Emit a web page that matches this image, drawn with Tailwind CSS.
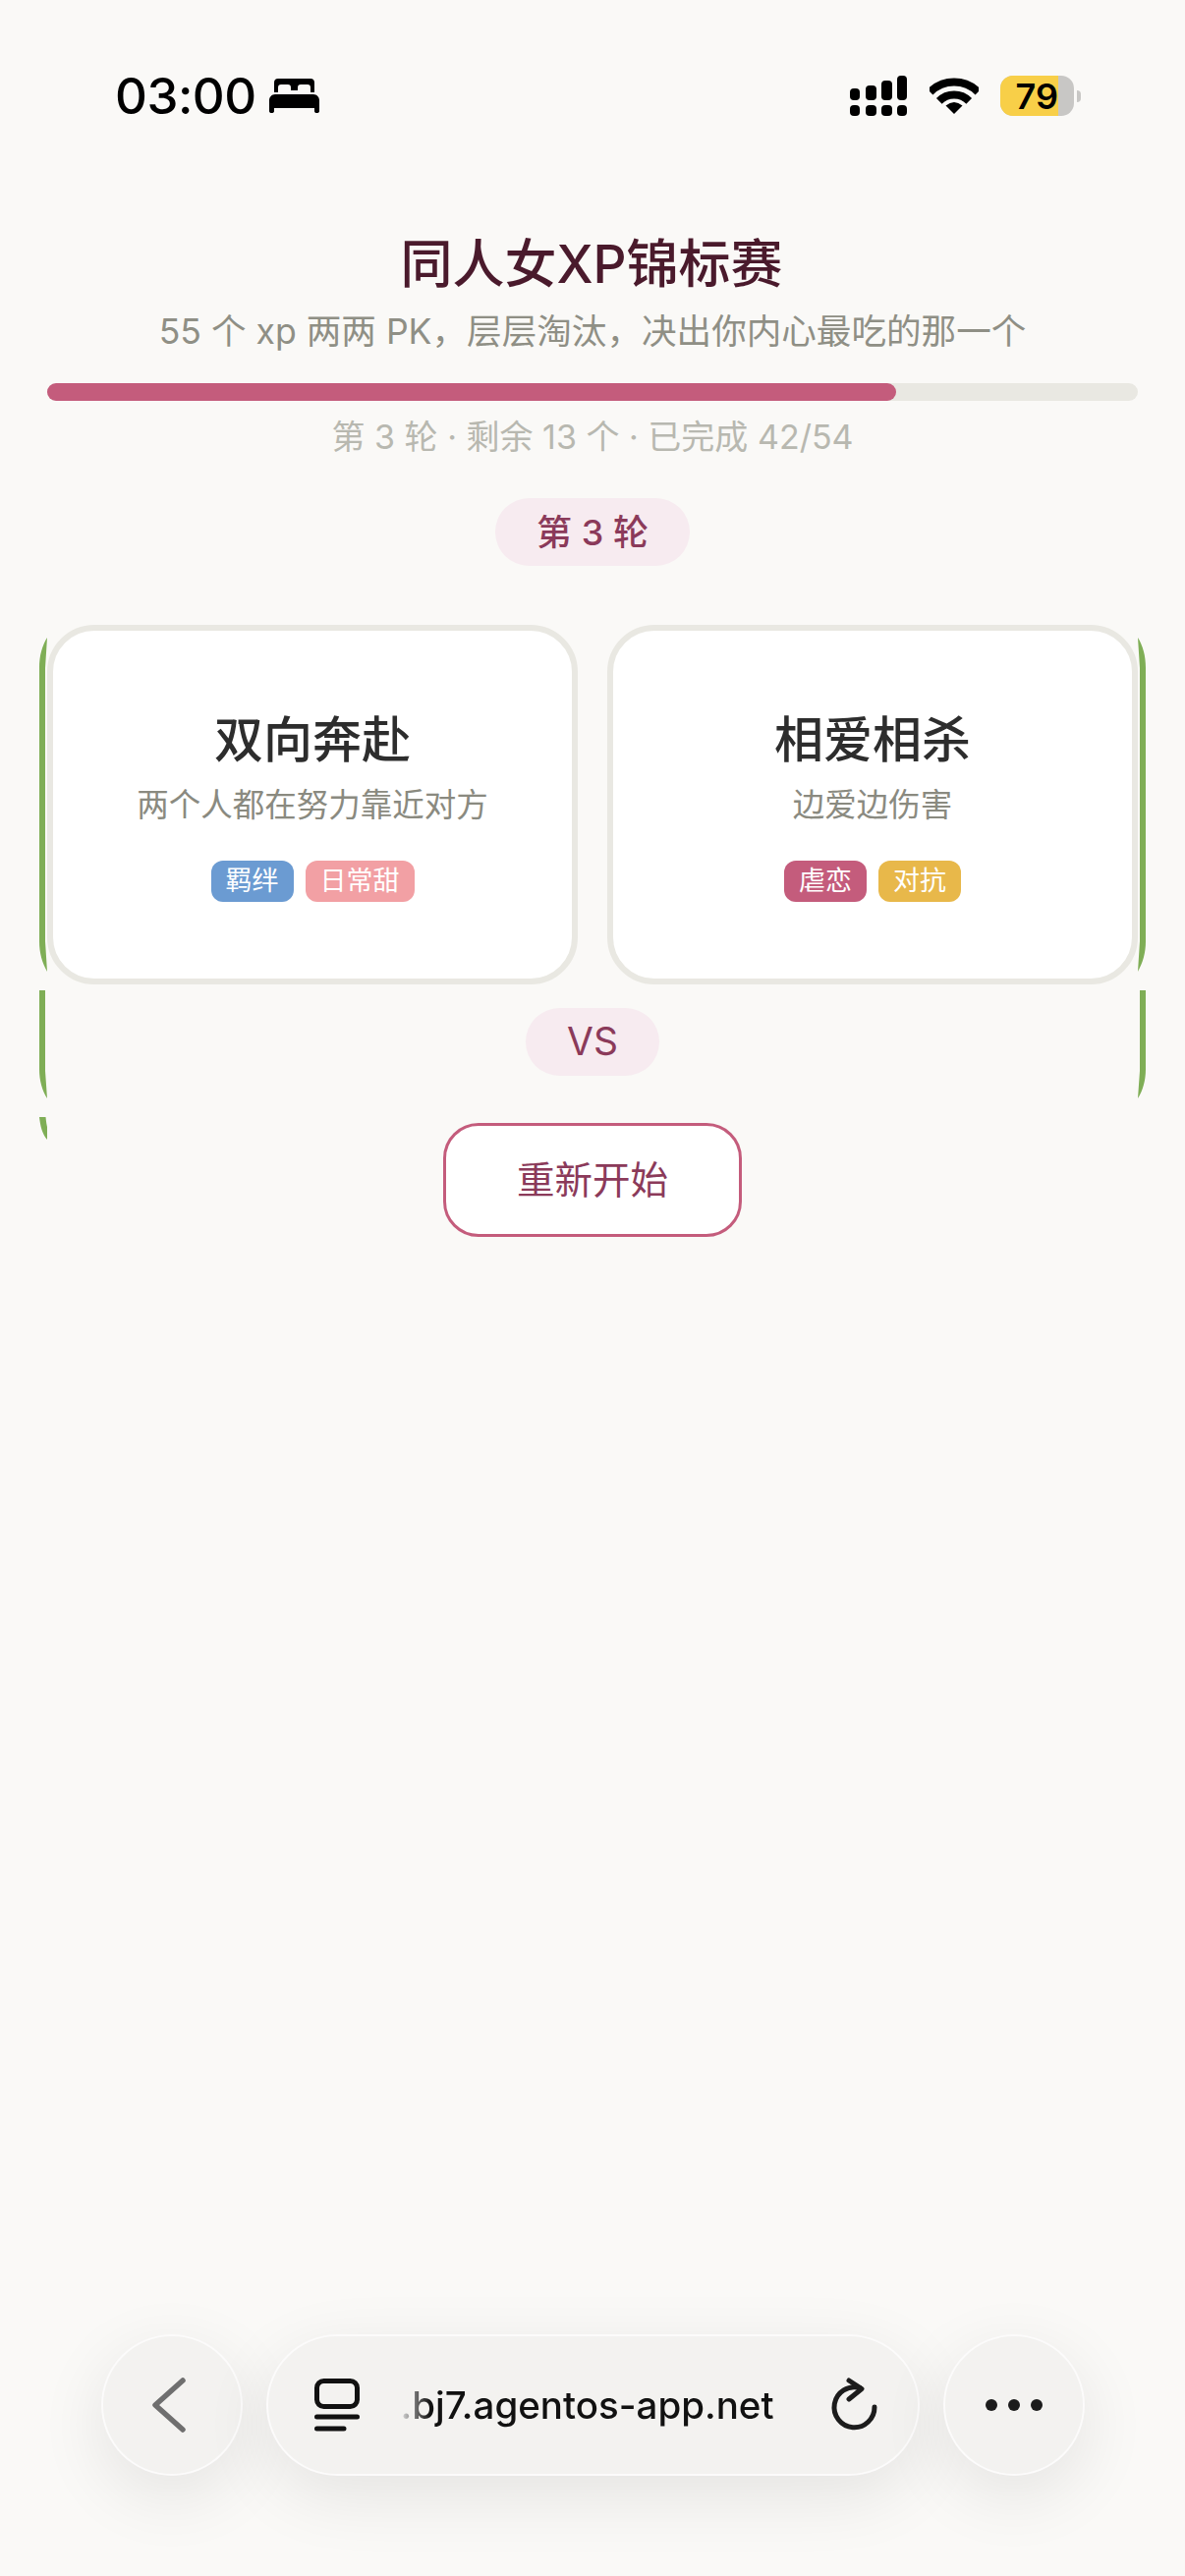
<!DOCTYPE html>
<html lang="zh-CN">
<head>
    <meta charset="UTF-8">
    <meta name="viewport" content="width=device-width, initial-scale=1.0">
    <title>同人女XP锦标赛</title>
    <script src="https://cdn.jsdelivr.net/npm/@tailwindcss/browser@4"></script>
</head>
<body class="bg-[#faf9f7]">
<div class="relative w-[1206px] h-[2622px] overflow-hidden flex flex-col bg-[#faf9f7] font-['Inter','Noto_Sans_CJK_SC',sans-serif]">

    <!-- green edges peeking out from behind the cards -->
    <svg class="absolute left-0 top-0" width="1206" height="1200" viewBox="0 0 1206 1200" fill="#7fae56">
        <path d="M48 649C43 657 40 667 40 680V958C40 970 43 980 48 989L46 958V680Z"/>
        <path d="M40 1008H46V1090L48 1118C43 1110 40 1100 40 1088Z"/>
        <path d="M40 1137H46.5C47 1142 47.5 1145 48 1147V1160C43 1154 41 1146 40 1137Z"/>
        <path d="M1158 649C1163 657 1166 667 1166 680V958C1166 970 1163 980 1158 989L1160 958V680Z"/>
        <path d="M1166 1008H1160V1090L1158 1118C1163 1110 1166 1100 1166 1088Z"/>
    </svg>

    <!-- status bar -->
    <div class="relative flex items-center justify-between h-[41px] mt-[77px] pl-[117px] pr-[106px]">
        <div class="flex items-center gap-[13px]">
            <span class="text-[51px] leading-[41px] font-medium text-black tracking-[-0.5px]">03:00</span>
            <svg width="51" height="35" viewBox="0 0 51 35" fill="#000">
                <path fill-rule="evenodd" d="M9 0H42C44.5 0 46 1.5 46 4V14H42V9C42 7 41 6 39 6H32C30 6 29 7 29 9V12H22V9C22 7 21 6 19 6H12C10 6 9 7 9 9V14H5V4C5 1.5 6.5 0 9 0Z"/>
                <path d="M6 16H45C48.5 16 51 19 51 22V33C51 34.5 50 35 48.5 35C47 35 46 34.5 46 33V30H5V33C5 34.5 4 35 2.5 35C1 35 0 34.5 0 33V22C0 19 2.5 16 6 16Z"/>
            </svg>
        </div>
        <div class="flex items-center">
            <svg width="58" height="41" viewBox="0 0 58 41" fill="#000">
                <rect x="0" y="13" width="10" height="12" rx="4"/>
                <rect x="16" y="10" width="11" height="15" rx="4"/>
                <rect x="32" y="5" width="11" height="20" rx="4"/>
                <rect x="48" y="0" width="10" height="25" rx="4"/>
                <rect x="0" y="30" width="10" height="11" rx="4"/>
                <rect x="16" y="30" width="11" height="11" rx="4"/>
                <rect x="32" y="30" width="11" height="11" rx="4"/>
                <rect x="48" y="30" width="10" height="11" rx="4"/>
            </svg>
            <svg class="ml-[23px]" width="50" height="37" viewBox="0 0 50 37" fill="none">
                <path d="M0.6 14.6A34.5 34.5 0 0 1 49.4 14.6" stroke="#000" stroke-width="8"/>
                <path d="M9.8 23.8A21.5 21.5 0 0 1 40.2 23.8" stroke="#000" stroke-width="8"/>
                <path d="M25 37L16.5 28.5Q25 21.5 33.5 28.5Z" fill="#000"/>
            </svg>
            <div class="relative ml-[22px] w-[75px] h-[41px] rounded-[13px] overflow-hidden bg-[#c8c7c5]">
                <div class="w-[59px] h-full bg-[#f8cf48] flex items-center justify-end">
                    <span class="text-[36px] leading-none font-semibold text-black">79</span>
                </div>
            </div>
            <div class="ml-[3px] w-[4px] h-[12px] rounded-r-full bg-[#c8c7c5]"></div>
        </div>
    </div>

    <!-- header -->
    <h1 class="relative mt-[121px] pr-[2px] text-center text-[53px] leading-[60px] font-medium text-[#4a1a2c]">同人女XP锦标赛</h1>
    <p class="relative mt-[15px] text-center text-[35.6px] leading-[48px] text-[#8f8f85]">55 个 xp 两两 PK，层层淘汰，决出你内心最吃的那一个</p>
    <div class="relative mt-[28px] mx-[48px] h-[18px] rounded-full bg-[#e9e8e2]">
        <div class="h-full w-[77.8%] rounded-full bg-[#c45c7c]"></div>
    </div>
    <p class="relative mt-[15px] text-center text-[34px] leading-[44px] text-[#b8b8b0]">第 3 轮 · 剩余 13 个 · 已完成 42/54</p>

    <div class="relative mt-[40px] flex justify-center">
        <span class="flex items-center justify-center w-[198px] h-[69px] rounded-full bg-[#f7ebf0] text-[36px] font-medium text-[#8b3a5a]">第 3 轮</span>
    </div>

    <!-- match cards -->
    <div class="relative mt-[60px] mx-[48px] grid grid-cols-2 gap-[30px]">
        <div class="h-[366px] rounded-[48px] border-[6px] border-[#e9e8e2] bg-white flex flex-col items-center pt-[81px]">
            <div class="text-[50px] leading-[60px] font-medium text-[#2d2d2d]">双向奔赴</div>
            <div class="mt-[15px] text-[32.5px] leading-[44px] text-[#8a8a80]">两个人都在努力靠近对方</div>
            <div class="mt-[34px] flex gap-[12px]">
                <span class="px-[15px] h-[42px] flex items-center rounded-[12px] bg-[#6b9bd2] text-[27px] text-white">羁绊</span>
                <span class="px-[15px] h-[42px] flex items-center rounded-[12px] bg-[#f2a0a4] text-[27px] text-white">日常甜</span>
            </div>
        </div>
        <div class="h-[366px] rounded-[48px] border-[6px] border-[#e9e8e2] bg-white flex flex-col items-center pt-[81px]">
            <div class="text-[50px] leading-[60px] font-medium text-[#2d2d2d]">相爱相杀</div>
            <div class="mt-[15px] text-[32.5px] leading-[44px] text-[#8a8a80]">边爱边伤害</div>
            <div class="mt-[34px] flex gap-[12px]">
                <span class="px-[15px] h-[42px] flex items-center rounded-[12px] bg-[#c45c7c] text-[27px] text-white">虐恋</span>
                <span class="px-[15px] h-[42px] flex items-center rounded-[12px] bg-[#e8b84a] text-[27px] text-white">对抗</span>
            </div>
        </div>
    </div>

    <div class="relative mt-[24px] flex justify-center">
        <span class="flex items-center justify-center w-[136px] h-[69px] rounded-full bg-[#f7ebf0] text-[39px] font-normal text-[#8b3a5a]">VS</span>
    </div>

    <div class="relative mt-[48px] flex justify-center">
        <button class="w-[304px] h-[116px] rounded-[36px] border-[3px] border-[#c45c7c] bg-white pt-[2px] text-[38.5px] text-[#8b3a5a]">重新开始</button>
    </div>

    <!-- browser toolbar -->
    <div class="mt-auto mb-[102px] flex justify-center gap-[24px]">
        <div class="w-[144px] h-[144px] rounded-full border-2 border-white/70 bg-[#f3f2f0] shadow-[0_20px_70px_rgba(0,0,0,0.09)] flex items-center justify-center">
            <svg class="mr-[6px]" width="36" height="58" viewBox="0 0 36 58" fill="none">
                <path d="M32 4L4 29L32 54" stroke="#6f6f6f" stroke-width="5.5" stroke-linecap="round" stroke-linejoin="round"/>
            </svg>
        </div>
        <div class="w-[665px] h-[144px] rounded-full border-2 border-white/70 bg-[#f3f2f0] shadow-[0_20px_70px_rgba(0,0,0,0.09)] flex items-center pl-[47px]">
            <svg width="46" height="54" viewBox="0 0 46 54" fill="none">
                <rect x="2.5" y="2.5" width="41" height="26" rx="7" stroke="#111" stroke-width="5"/>
                <path d="M2.5 39H43.5M2.5 51H30" stroke="#111" stroke-width="5" stroke-linecap="round"/>
            </svg>
            <span class="ml-[42px] text-[38.5px] leading-[50px] font-medium text-transparent bg-clip-text bg-linear-to-r from-[#dddddd] to-[#111111] to-[8%]">.bj7.agentos-app.net</span>
            <svg class="ml-[auto] mr-[40px]" width="50" height="56" viewBox="0 0 50 56" fill="none">
                <path d="M31 10.5A20.5 20.5 0 1 0 46 30" stroke="#1c1c1c" stroke-width="5" stroke-linecap="round"/>
                <path d="M20 3L33 11.5L20 22" stroke="#1c1c1c" stroke-width="5" stroke-linecap="round" stroke-linejoin="round"/>
            </svg>
        </div>
        <div class="w-[144px] h-[144px] rounded-full border-2 border-white/70 bg-[#f3f2f0] shadow-[0_20px_70px_rgba(0,0,0,0.09)] flex items-center justify-center gap-[11px]">
            <span class="w-[12px] h-[12px] rounded-full bg-[#1c1c1c]"></span>
            <span class="w-[12px] h-[12px] rounded-full bg-[#1c1c1c]"></span>
            <span class="w-[12px] h-[12px] rounded-full bg-[#1c1c1c]"></span>
        </div>
    </div>
</div>
</body>
</html>
